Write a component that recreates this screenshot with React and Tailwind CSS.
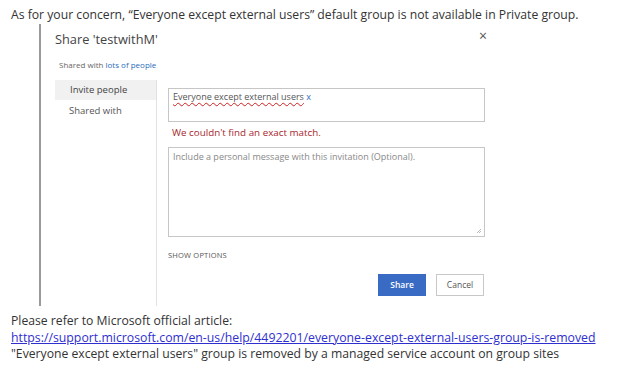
export default function App() {
  return (
    <div className="w-[624px] h-[371px] bg-white overflow-hidden text-[#333]" style={{ fontFamily: '"Open Sans", sans-serif' }}>
      <p className="pl-[11px] pt-[6px] text-[12.2px] leading-[17px] whitespace-nowrap">
        As for your concern, “Everyone except external users” default group is not available in Private group.
      </p>
      <div className="ml-[39px] mt-[1px] h-[282px] border-l-2 border-[#9a9a9a] flex flex-col">
        <div className="flex items-start pl-[14px] pt-[5px] w-[446px]">
          <div className="text-[12.8px] leading-[20px] text-[#444]">Share 'testwithM'</div>
          <div className="ml-auto -mt-[3px] text-[14px] leading-[20px] text-[#555]">×</div>
        </div>
        <div className="pl-[18px] mt-[10px] text-[8px] leading-[12px] text-[#666]">
          Shared with <span className="text-[#2a6ebb]">lots of people</span>
        </div>
        <div className="flex mt-[9px] flex-1">
          <div className="ml-[14px] w-[102px] border-r border-[#e2e2e2] flex flex-col">
            <div className="h-[20px] bg-[#f1f1f1] pl-[15px] text-[9.5px] leading-[20px] text-[#444]">Invite people</div>
            <div className="h-[21px] pl-[14px] text-[9.5px] leading-[21px] text-[#555]">Shared with</div>
          </div>
          <div className="pl-[11px] pt-[8px] w-[328px] flex flex-col">
            <div className="h-[34px] border border-[#c6c6c6] pl-[4px] pt-[2px] text-[9px] leading-[12px]">
              <span className="text-[#555] underline decoration-wavy decoration-[#d02020] decoration-1 underline-offset-2">Everyone except external users</span>
              <span className="text-[#2a6ebb]"> x</span>
            </div>
            <div className="mt-[4px] pl-[4px] text-[9.8px] leading-[14px] text-[#a8262c]">We couldn't find an exact match.</div>
            <div className="relative mt-[7px] h-[90px] border border-[#c6c6c6] pl-[4px] pt-[3px] text-[9px] leading-[12px] text-[#888]">
              Include a personal message with this invitation (Optional).
              <svg className="absolute right-[2px] bottom-[2px]" width="6" height="6" viewBox="0 0 6 6">
                <path d="M5 1 L1 5 M5 3 L3 5" stroke="#aaa" strokeWidth="0.8" />
              </svg>
            </div>
            <div className="mt-[12px] text-[7.5px] leading-[12px] text-[#555] tracking-[0.2px]">SHOW OPTIONS</div>
            <div className="mt-[13px] flex justify-end gap-[10px] pr-[1px]">
              <div className="w-[48px] h-[22px] bg-[#3a6bc4] text-white text-[8.5px] leading-[22px] text-center font-semibold">Share</div>
              <div className="w-[48px] h-[22px] border border-[#c8c8c8] text-[#555] text-[8.5px] leading-[20px] text-center">Cancel</div>
            </div>
          </div>
        </div>
      </div>
      <div className="pl-[11px] pt-[6px] text-[12.2px] leading-[17px] whitespace-nowrap">
        <p>Please refer to Microsoft official article:</p>
        <p><a className="text-[#2f2fd0] underline text-[12.3px]" href="#">https://support.microsoft.com/en-us/help/4492201/everyone-except-external-users-group-is-removed</a></p>
        <p className="-mt-[1px]">"Everyone except external users" group is removed by a managed service account on group sites</p>
      </div>
    </div>
  );
}
